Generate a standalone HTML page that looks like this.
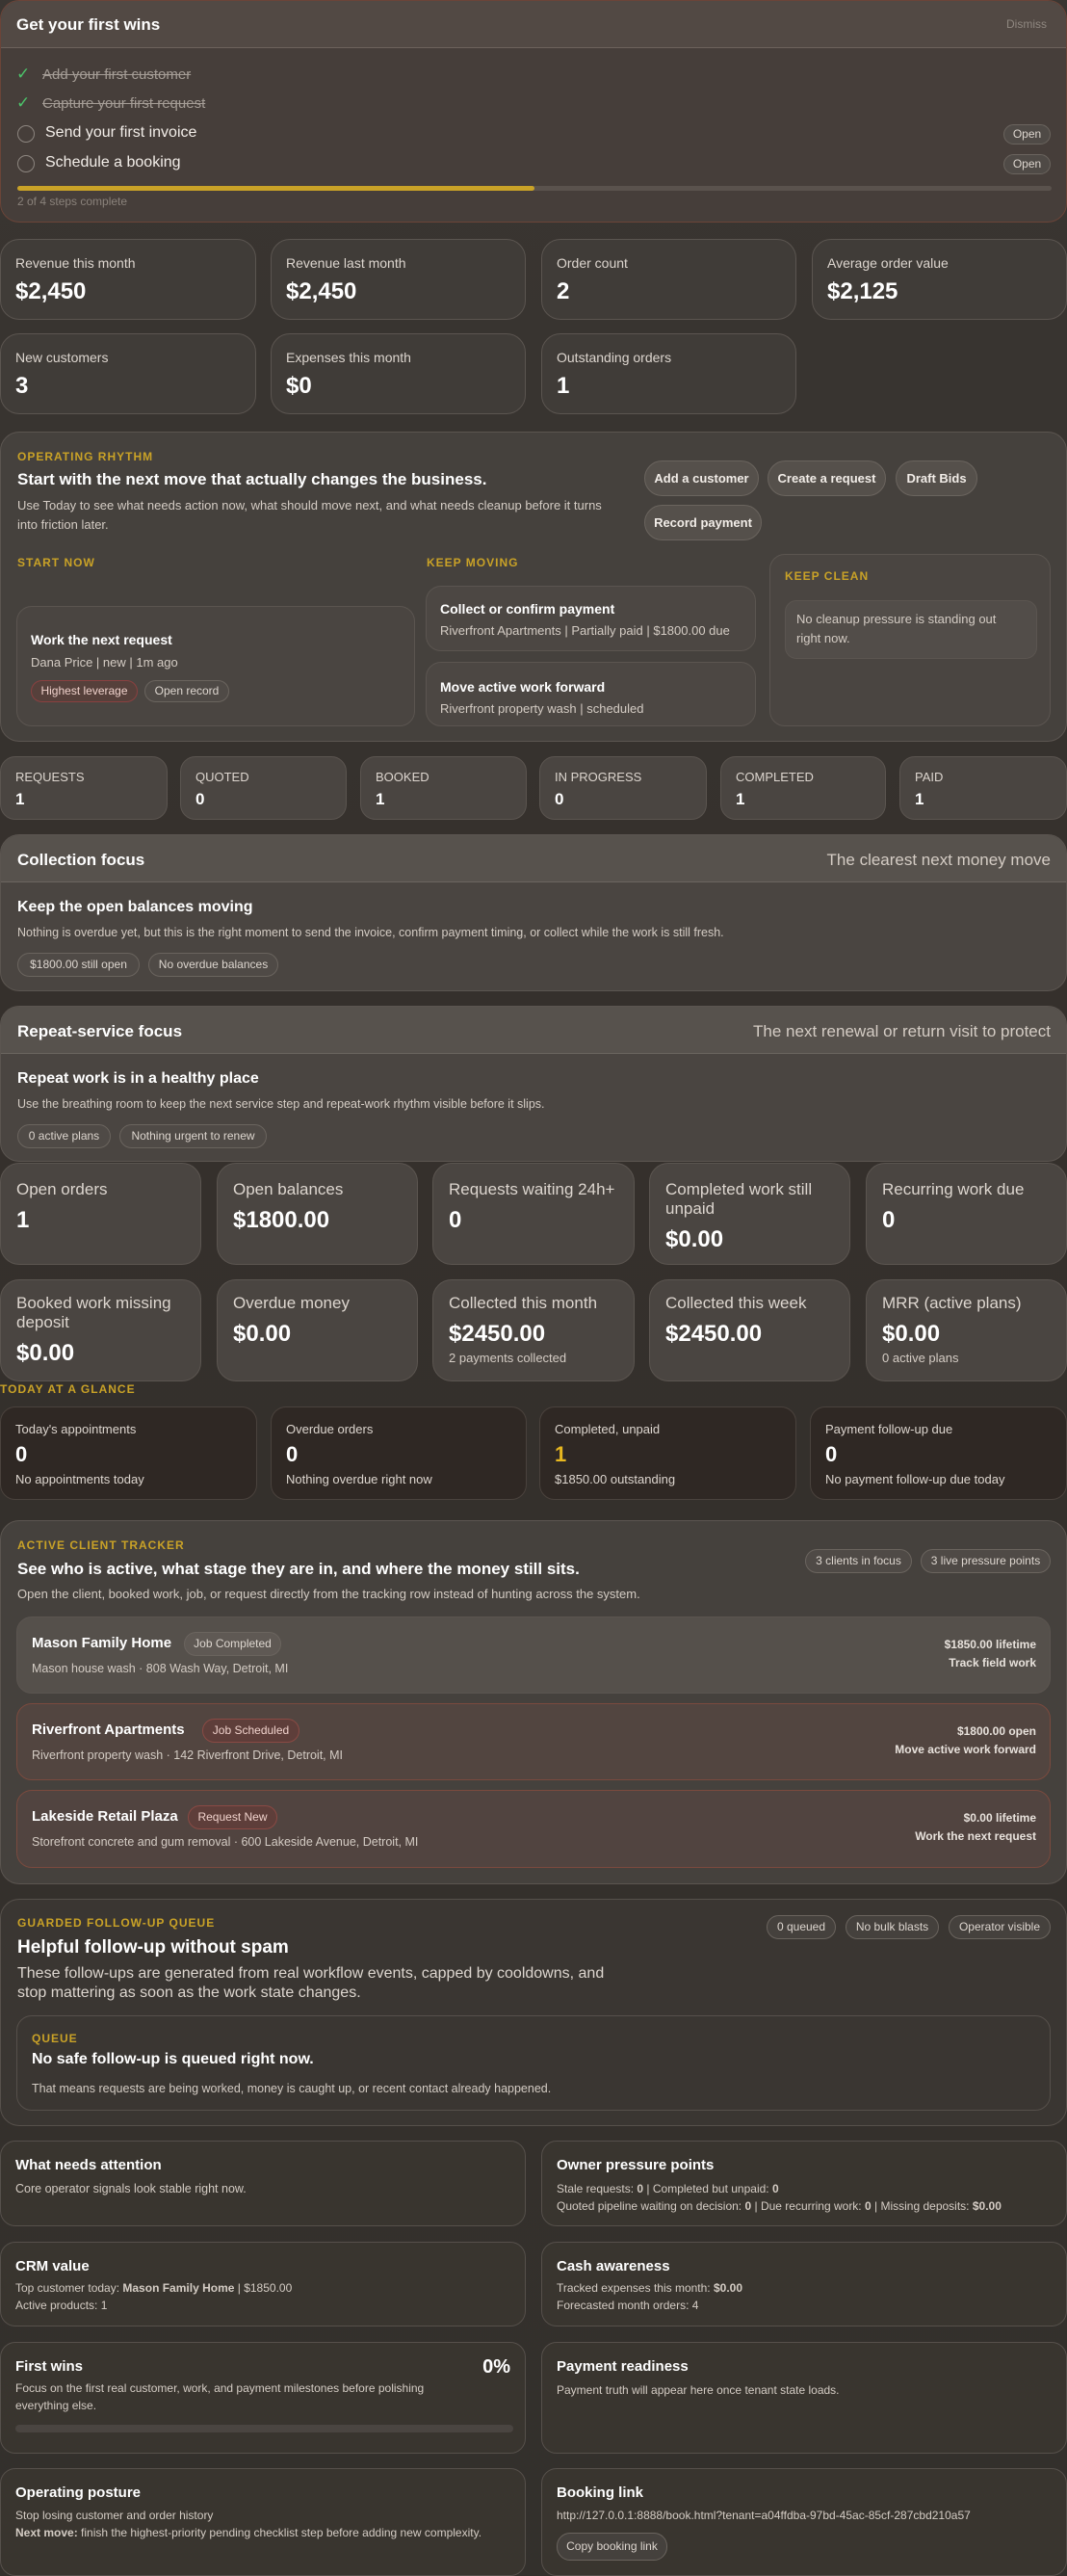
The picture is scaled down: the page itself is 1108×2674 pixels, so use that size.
<!DOCTYPE html>
<html><head><meta charset="utf-8">
<style>
*{box-sizing:border-box;margin:0;padding:0}
html,body{width:1108px;height:2674px;overflow:hidden}
body{background:linear-gradient(180deg,#3a3632 0%,#35302c 40%,#33302c 100%);font-family:"Liberation Sans",sans-serif;color:#e8e2dc;position:relative}
.a{position:absolute}
.card{position:absolute;border:1px solid #5b5550;border-radius:20px;background:#46423e}
.t{position:absolute;white-space:nowrap}
.gold{color:#c9a227;font-weight:bold;letter-spacing:1px;font-size:12px}
.pill{position:absolute;border:1px solid #6a645e;border-radius:14px;background:#4f4a46;font-size:12px;color:#ddd6cf;text-align:center;white-space:nowrap}
.lbl{font-size:14px;color:#ddd6cf}
.val{font-size:24px;font-weight:bold;color:#fff}
.h{font-weight:bold;color:#fff}
.m{font-size:13px;color:#d4ccc4}
</style></head><body>

<!-- First wins -->
<div class="card" style="left:0;top:0;width:1108px;height:231px;border-color:#6b4438;background:#463e3a;overflow:hidden">
  <div class="a" style="left:0;top:0;width:1108px;height:49px;background:#524944;border-bottom:1px solid #6d625c"></div>
  <div class="t h" style="left:16px;top:15px;font-size:17px">Get your first wins</div>
  <div class="t" style="right:20px;top:17px;font-size:12px;color:#8f8780">Dismiss</div>
  <div class="t" style="left:16px;top:66px;font-size:17px;color:#4cc36a">✓</div>
  <div class="t" style="left:43px;top:68px;font-size:15px;color:#a59d96;text-decoration:line-through">Add your first customer</div>
  <div class="t" style="left:16px;top:96px;font-size:17px;color:#4cc36a">✓</div>
  <div class="t" style="left:43px;top:98px;font-size:15px;color:#a59d96;text-decoration:line-through">Capture your first request</div>
  <div class="a" style="left:17px;top:129px;width:18px;height:18px;border:1.5px solid #8d8680;border-radius:50%"></div>
  <div class="t" style="left:46px;top:128px;font-size:16px;color:#f2ede8">Send your first invoice</div>
  <div class="pill" style="left:1041px;top:128px;width:49px;height:21px;line-height:19px">Open</div>
  <div class="a" style="left:17px;top:160px;width:18px;height:18px;border:1.5px solid #8d8680;border-radius:50%"></div>
  <div class="t" style="left:46px;top:159px;font-size:16px;color:#f2ede8">Schedule a booking</div>
  <div class="pill" style="left:1041px;top:159px;width:49px;height:21px;line-height:19px">Open</div>
  <div class="a" style="left:17px;top:192px;width:1074px;height:5px;background:#5a524d;border-radius:3px"></div>
  <div class="a" style="left:17px;top:192px;width:537px;height:5px;background:#c9a227;border-radius:3px"></div>
  <div class="t" style="left:17px;top:201px;font-size:12px;color:#8a827b">2 of 4 steps complete</div>
</div>

<!-- stat cards -->
<div class="card" style="left:0;top:248px;width:266px;height:84px;background:#403c38"><div class="t lbl" style="left:15px;top:16px">Revenue this month</div><div class="t val" style="left:15px;top:40px">$2,450</div></div>
<div class="card" style="left:281px;top:248px;width:265px;height:84px;background:#403c38"><div class="t lbl" style="left:15px;top:16px">Revenue last month</div><div class="t val" style="left:15px;top:40px">$2,450</div></div>
<div class="card" style="left:562px;top:248px;width:265px;height:84px;background:#403c38"><div class="t lbl" style="left:15px;top:16px">Order count</div><div class="t val" style="left:15px;top:40px">2</div></div>
<div class="card" style="left:843px;top:248px;width:265px;height:84px;background:#403c38"><div class="t lbl" style="left:15px;top:16px">Average order value</div><div class="t val" style="left:15px;top:40px">$2,125</div></div>
<div class="card" style="left:0;top:346px;width:266px;height:84px;background:#403c38"><div class="t lbl" style="left:15px;top:16px">New customers</div><div class="t val" style="left:15px;top:40px">3</div></div>
<div class="card" style="left:281px;top:346px;width:265px;height:84px;background:#403c38"><div class="t lbl" style="left:15px;top:16px">Expenses this month</div><div class="t val" style="left:15px;top:40px">$0</div></div>
<div class="card" style="left:562px;top:346px;width:265px;height:84px;background:#403c38"><div class="t lbl" style="left:15px;top:16px">Outstanding orders</div><div class="t val" style="left:15px;top:40px">1</div></div>

<!-- Operating rhythm -->
<div class="card" style="left:0;top:448px;width:1108px;height:322px;background:#45413d">
  <div class="t gold" style="left:17px;top:18px">OPERATING RHYTHM</div>
  <div class="t h" style="left:17px;top:39px;font-size:17px">Start with the next move that actually changes the business.</div>
  <div class="a" style="left:17px;top:66px;width:620px;font-size:13px;line-height:20px;color:#d4ccc4">Use Today to see what needs action now, what should move next, and what needs cleanup before it turns into friction later.</div>
  <div class="pill" style="left:668px;top:29px;width:119px;height:37px;line-height:35px;font-size:13px;font-weight:bold;color:#f2ede8;border-radius:19px;background:#55504b">Add a customer</div>
  <div class="pill" style="left:796px;top:29px;width:123px;height:37px;line-height:35px;font-size:13px;font-weight:bold;color:#f2ede8;border-radius:19px;background:#55504b">Create a request</div>
  <div class="pill" style="left:929px;top:29px;width:85px;height:37px;line-height:35px;font-size:13px;font-weight:bold;color:#f2ede8;border-radius:19px;background:#55504b">Draft Bids</div>
  <div class="pill" style="left:668px;top:75px;width:122px;height:37px;line-height:35px;font-size:13px;font-weight:bold;color:#f2ede8;border-radius:19px;background:#55504b">Record payment</div>
  <div class="t gold" style="left:17px;top:128px">START NOW</div>
  <div class="t gold" style="left:442px;top:128px">KEEP MOVING</div>
  <div class="card" style="left:16px;top:180px;width:414px;height:125px;background:#4a4541;border-radius:16px">
    <div class="t h" style="left:14px;top:26px;font-size:14px">Work the next request</div>
    <div class="t m" style="left:14px;top:50px">Dana Price | new | 1m ago</div>
    <div class="pill" style="left:14px;top:76px;width:111px;height:23px;line-height:21px;border-color:#8a4040;background:#56403b;color:#f0d2cc">Highest leverage</div>
    <div class="pill" style="left:132px;top:76px;width:88px;height:23px;line-height:21px">Open record</div>
  </div>
  <div class="card" style="left:441px;top:159px;width:343px;height:68px;background:#4c4743;border-radius:16px">
    <div class="t h" style="left:14px;top:15px;font-size:14px">Collect or confirm payment</div>
    <div class="t m" style="left:14px;top:38px">Riverfront Apartments | Partially paid | $1800.00 due</div>
  </div>
  <div class="card" style="left:441px;top:238px;width:343px;height:67px;background:#4c4743;border-radius:16px">
    <div class="t h" style="left:14px;top:17px;font-size:14px">Move active work forward</div>
    <div class="t m" style="left:14px;top:40px">Riverfront property wash | scheduled</div>
  </div>
  <div class="card" style="left:798px;top:126px;width:292px;height:179px;background:#4a4541;border-radius:16px">
    <div class="t gold" style="left:15px;top:15px">KEEP CLEAN</div>
    <div class="card" style="left:15px;top:47px;width:262px;height:61px;background:#524d49;border-radius:12px">
      <div class="a m" style="left:11px;top:9px;width:230px;line-height:20px">No cleanup pressure is standing out right now.</div>
    </div>
  </div>
</div>

<!-- pipeline -->
<div class="card" style="left:0;top:785px;width:174px;height:66px;background:#4a4541;border-radius:16px"><div class="t lbl" style="left:15px;top:13px;font-size:13px">REQUESTS</div><div class="t h" style="left:15px;top:34px;font-size:17px">1</div></div>
<div class="card" style="left:187px;top:785px;width:173px;height:66px;background:#4a4541;border-radius:16px"><div class="t lbl" style="left:15px;top:13px;font-size:13px">QUOTED</div><div class="t h" style="left:15px;top:34px;font-size:17px">0</div></div>
<div class="card" style="left:374px;top:785px;width:173px;height:66px;background:#4a4541;border-radius:16px"><div class="t lbl" style="left:15px;top:13px;font-size:13px">BOOKED</div><div class="t h" style="left:15px;top:34px;font-size:17px">1</div></div>
<div class="card" style="left:560px;top:785px;width:174px;height:66px;background:#4a4541;border-radius:16px"><div class="t lbl" style="left:15px;top:13px;font-size:13px">IN PROGRESS</div><div class="t h" style="left:15px;top:34px;font-size:17px">0</div></div>
<div class="card" style="left:748px;top:785px;width:172px;height:66px;background:#4a4541;border-radius:16px"><div class="t lbl" style="left:15px;top:13px;font-size:13px">COMPLETED</div><div class="t h" style="left:15px;top:34px;font-size:17px">1</div></div>
<div class="card" style="left:934px;top:785px;width:174px;height:66px;background:#4a4541;border-radius:16px"><div class="t lbl" style="left:15px;top:13px;font-size:13px">PAID</div><div class="t h" style="left:15px;top:34px;font-size:17px">1</div></div>

<!-- Collection focus -->
<div class="card" style="left:0;top:866px;width:1108px;height:163px;background:#4a4541;overflow:hidden">
  <div class="a" style="left:0;top:0;width:1108px;height:49px;background:#57524d;border-bottom:1px solid #6b655f"></div>
  <div class="t h" style="left:17px;top:16px;font-size:17px">Collection focus</div>
  <div class="t" style="right:16px;top:16px;font-size:17px;color:#d4ccc4">The clearest next money move</div>
  <div class="t h" style="left:17px;top:66px;font-size:16px">Keep the open balances moving</div>
  <div class="t m" style="left:17px;top:94px;font-size:12.5px">Nothing is overdue yet, but this is the right moment to send the invoice, confirm payment timing, or collect while the work is still fresh.</div>
  <div class="pill" style="left:17px;top:122px;width:127px;height:25px;line-height:23px">$1800.00 still open</div>
  <div class="pill" style="left:153px;top:122px;width:135px;height:25px;line-height:23px">No overdue balances</div>
</div>

<!-- Repeat-service -->
<div class="card" style="left:0;top:1044px;width:1108px;height:162px;background:#4a4541;overflow:hidden">
  <div class="a" style="left:0;top:0;width:1108px;height:49px;background:#57524d;border-bottom:1px solid #6b655f"></div>
  <div class="t h" style="left:17px;top:16px;font-size:17px">Repeat-service focus</div>
  <div class="t" style="right:16px;top:16px;font-size:17px;color:#d4ccc4">The next renewal or return visit to protect</div>
  <div class="t h" style="left:17px;top:66px;font-size:16px">Repeat work is in a healthy place</div>
  <div class="t m" style="left:17px;top:94px;font-size:12.5px">Use the breathing room to keep the next service step and repeat-work rhythm visible before it slips.</div>
  <div class="pill" style="left:17px;top:122px;width:97px;height:25px;line-height:23px">0 active plans</div>
  <div class="pill" style="left:123px;top:122px;width:153px;height:25px;line-height:23px">Nothing urgent to renew</div>
</div>

<!-- metrics -->
<div class="card" style="left:0;top:1207px;width:209px;height:106px;background:#4a4541"><div class="t" style="left:16px;top:17px;font-size:17px;color:#ddd6cf">Open orders</div><div class="t val" style="left:16px;top:45px">1</div></div>
<div class="card" style="left:225px;top:1207px;width:209px;height:106px;background:#4a4541"><div class="t" style="left:16px;top:17px;font-size:17px;color:#ddd6cf">Open balances</div><div class="t val" style="left:16px;top:45px">$1800.00</div></div>
<div class="card" style="left:449px;top:1207px;width:210px;height:106px;background:#4a4541"><div class="t" style="left:16px;top:17px;font-size:17px;color:#ddd6cf">Requests waiting 24h+</div><div class="t val" style="left:16px;top:45px">0</div></div>
<div class="card" style="left:674px;top:1207px;width:209px;height:106px;background:#4a4541"><div class="a" style="left:16px;top:17px;font-size:17px;line-height:20px;color:#ddd6cf;width:170px">Completed work still unpaid</div><div class="t val" style="left:16px;top:65px">$0.00</div></div>
<div class="card" style="left:899px;top:1207px;width:209px;height:106px;background:#4a4541"><div class="t" style="left:16px;top:17px;font-size:17px;color:#ddd6cf">Recurring work due</div><div class="t val" style="left:16px;top:45px">0</div></div>

<div class="card" style="left:0;top:1328px;width:209px;height:106px;background:#4a4541"><div class="a" style="left:16px;top:14px;font-size:17px;line-height:20px;color:#ddd6cf;width:185px">Booked work missing deposit</div><div class="t val" style="left:16px;top:62px">$0.00</div></div>
<div class="card" style="left:225px;top:1328px;width:209px;height:106px;background:#4a4541"><div class="t" style="left:16px;top:14px;font-size:17px;color:#ddd6cf">Overdue money</div><div class="t val" style="left:16px;top:42px">$0.00</div></div>
<div class="card" style="left:449px;top:1328px;width:210px;height:106px;background:#4a4541"><div class="t" style="left:16px;top:14px;font-size:17px;color:#ddd6cf">Collected this month</div><div class="t val" style="left:16px;top:42px">$2450.00</div><div class="t m" style="left:16px;top:73px">2 payments collected</div></div>
<div class="card" style="left:674px;top:1328px;width:209px;height:106px;background:#4a4541"><div class="t" style="left:16px;top:14px;font-size:17px;color:#ddd6cf">Collected this week</div><div class="t val" style="left:16px;top:42px">$2450.00</div></div>
<div class="card" style="left:899px;top:1328px;width:209px;height:106px;background:#4a4541"><div class="t" style="left:16px;top:14px;font-size:17px;color:#ddd6cf">MRR (active plans)</div><div class="t val" style="left:16px;top:42px">$0.00</div><div class="t m" style="left:16px;top:73px">0 active plans</div></div>

<div class="t gold" style="left:0;top:1435px">TODAY AT A GLANCE</div>
<div class="card" style="left:0;top:1460px;width:267px;height:97px;background:#2f2824;border-color:#4a423d;border-radius:16px"><div class="t lbl" style="left:15px;top:15px;font-size:13px">Today's appointments</div><div class="t val" style="left:15px;top:36px;font-size:22px">0</div><div class="t lbl" style="left:15px;top:67px;font-size:13px">No appointments today</div></div>
<div class="card" style="left:281px;top:1460px;width:266px;height:97px;background:#2f2824;border-color:#4a423d;border-radius:16px"><div class="t lbl" style="left:15px;top:15px;font-size:13px">Overdue orders</div><div class="t val" style="left:15px;top:36px;font-size:22px">0</div><div class="t lbl" style="left:15px;top:67px;font-size:13px">Nothing overdue right now</div></div>
<div class="card" style="left:560px;top:1460px;width:267px;height:97px;background:#2f2824;border-color:#4a423d;border-radius:16px"><div class="t lbl" style="left:15px;top:15px;font-size:13px">Completed, unpaid</div><div class="t val" style="left:15px;top:36px;font-size:22px;color:#e8b820">1</div><div class="t lbl" style="left:15px;top:67px;font-size:13px">$1850.00 outstanding</div></div>
<div class="card" style="left:841px;top:1460px;width:267px;height:97px;background:#2f2824;border-color:#4a423d;border-radius:16px"><div class="t lbl" style="left:15px;top:15px;font-size:13px">Payment follow-up due</div><div class="t val" style="left:15px;top:36px;font-size:22px">0</div><div class="t lbl" style="left:15px;top:67px;font-size:13px">No payment follow-up due today</div></div>

<!-- tracker -->
<div class="card" style="left:0;top:1578px;width:1108px;height:378px;background:#45413d">
  <div class="t gold" style="left:17px;top:18px">ACTIVE CLIENT TRACKER</div>
  <div class="t h" style="left:17px;top:40px;font-size:17px">See who is active, what stage they are in, and where the money still sits.</div>
  <div class="t m" style="left:17px;top:68px">Open the client, booked work, job, or request directly from the tracking row instead of hunting across the system.</div>
  <div class="pill" style="left:835px;top:29px;width:111px;height:25px;line-height:23px">3 clients in focus</div>
  <div class="pill" style="left:955px;top:29px;width:135px;height:25px;line-height:23px">3 live pressure points</div>
  <div class="card" style="left:16px;top:99px;width:1074px;height:80px;background:#55504b;border-radius:16px">
    <div class="t h" style="left:15px;top:18px;font-size:15px">Mason Family Home</div>
    <div class="pill" style="left:173px;top:15px;width:101px;height:25px;line-height:23px;background:#5f5954">Job Completed</div>
    <div class="t m" style="left:15px;top:46px;font-size:12.5px">Mason house wash · 808 Wash Way, Detroit, MI</div>
    <div class="t" style="right:14px;top:21px;font-size:12px;font-weight:bold;color:#e8e2dc">$1850.00 lifetime</div>
    <div class="t" style="right:14px;top:40px;font-size:12px;font-weight:bold;color:#e8e2dc">Track field work</div>
  </div>
  <div class="card" style="left:16px;top:189px;width:1074px;height:80px;background:#524540;border-color:#7a4a3e;border-radius:16px">
    <div class="t h" style="left:15px;top:18px;font-size:15px">Riverfront Apartments</div>
    <div class="pill" style="left:192px;top:15px;width:101px;height:25px;line-height:23px;background:#5e3e3a;border-color:#8a4a44;color:#f0d2cc">Job Scheduled</div>
    <div class="t m" style="left:15px;top:46px;font-size:12.5px">Riverfront property wash · 142 Riverfront Drive, Detroit, MI</div>
    <div class="t" style="right:14px;top:21px;font-size:12px;font-weight:bold;color:#e8e2dc">$1800.00 open</div>
    <div class="t" style="right:14px;top:40px;font-size:12px;font-weight:bold;color:#e8e2dc">Move active work forward</div>
  </div>
  <div class="card" style="left:16px;top:279px;width:1074px;height:81px;background:#514440;border-color:#7a4a3e;border-radius:16px">
    <div class="t h" style="left:15px;top:18px;font-size:15px">Lakeside Retail Plaza</div>
    <div class="pill" style="left:177px;top:15px;width:93px;height:25px;line-height:23px;background:#5e3e3a;border-color:#8a4a44;color:#f0d2cc">Request New</div>
    <div class="t m" style="left:15px;top:46px;font-size:12.5px">Storefront concrete and gum removal · 600 Lakeside Avenue, Detroit, MI</div>
    <div class="t" style="right:14px;top:21px;font-size:12px;font-weight:bold;color:#e8e2dc">$0.00 lifetime</div>
    <div class="t" style="right:14px;top:40px;font-size:12px;font-weight:bold;color:#e8e2dc">Work the next request</div>
  </div>
</div>

<!-- follow-up -->
<div class="card" style="left:0;top:1971px;width:1108px;height:236px;background:#3a3632;border-color:#56504b">
  <div class="t gold" style="left:17px;top:17px">GUARDED FOLLOW-UP QUEUE</div>
  <div class="t h" style="left:17px;top:39px;font-size:19px">Helpful follow-up without spam</div>
  <div class="a" style="left:17px;top:67px;width:640px;font-size:16px;line-height:20px;color:#ddd6cf">These follow-ups are generated from real workflow events, capped by cooldowns, and stop mattering as soon as the work state changes.</div>
  <div class="pill" style="left:795px;top:16px;width:72px;height:25px;line-height:23px;background:#45413d">0 queued</div>
  <div class="pill" style="left:877px;top:16px;width:97px;height:25px;line-height:23px;background:#45413d">No bulk blasts</div>
  <div class="pill" style="left:984px;top:16px;width:106px;height:25px;line-height:23px;background:#45413d">Operator visible</div>
  <div class="card" style="left:16px;top:120px;width:1074px;height:99px;background:#3a3632;border-color:#56504b;border-radius:16px">
    <div class="t gold" style="left:15px;top:16px">QUEUE</div>
    <div class="t h" style="left:15px;top:36px;font-size:16px">No safe follow-up is queued right now.</div>
    <div class="t m" style="left:15px;top:68px;font-size:12.5px">That means requests are being worked, money is caught up, or recent contact already happened.</div>
  </div>
</div>

<!-- bottom cards -->
<div class="card" style="left:0;top:2222px;width:546px;height:89px;background:#39352f;border-color:#56504b;border-radius:16px"><div class="t h" style="left:15px;top:16px;font-size:15px">What needs attention</div><div class="t m" style="left:15px;top:42px;font-size:12.5px">Core operator signals look stable right now.</div></div>
<div class="card" style="left:562px;top:2222px;width:546px;height:89px;background:#39352f;border-color:#56504b;border-radius:16px"><div class="t h" style="left:15px;top:16px;font-size:15px">Owner pressure points</div><div class="t m" style="left:15px;top:42px;font-size:12px">Stale requests: <b>0</b> | Completed but unpaid: <b>0</b></div><div class="t m" style="left:15px;top:60px;font-size:12px">Quoted pipeline waiting on decision: <b>0</b> | Due recurring work: <b>0</b> | Missing deposits: <b>$0.00</b></div></div>

<div class="card" style="left:0;top:2327px;width:546px;height:88px;background:#39352f;border-color:#56504b;border-radius:16px"><div class="t h" style="left:15px;top:16px;font-size:15px">CRM value</div><div class="t m" style="left:15px;top:40px;font-size:12px">Top customer today: <b>Mason Family Home</b> | $1850.00</div><div class="t m" style="left:15px;top:58px;font-size:12px">Active products: 1</div></div>
<div class="card" style="left:562px;top:2327px;width:546px;height:88px;background:#39352f;border-color:#56504b;border-radius:16px"><div class="t h" style="left:15px;top:16px;font-size:15px">Cash awareness</div><div class="t m" style="left:15px;top:40px;font-size:12px">Tracked expenses this month: <b>$0.00</b></div><div class="t m" style="left:15px;top:58px;font-size:12px">Forecasted month orders: 4</div></div>

<div class="card" style="left:0;top:2431px;width:546px;height:116px;background:#39352f;border-color:#56504b;border-radius:16px"><div class="t h" style="left:15px;top:16px;font-size:15px">First wins</div><div class="t h" style="right:15px;top:14px;font-size:20px">0%</div><div class="a m" style="left:15px;top:38px;width:440px;font-size:12px;line-height:18px">Focus on the first real customer, work, and payment milestones before polishing everything else.</div><div class="a" style="left:15px;top:85px;width:517px;height:8px;border-radius:4px;background:#4a4541"></div></div>
<div class="card" style="left:562px;top:2431px;width:546px;height:116px;background:#39352f;border-color:#56504b;border-radius:16px"><div class="t h" style="left:15px;top:16px;font-size:15px">Payment readiness</div><div class="t m" style="left:15px;top:42px;font-size:12px">Payment truth will appear here once tenant state loads.</div></div>

<div class="card" style="left:0;top:2562px;width:546px;height:112px;background:#39352f;border-color:#56504b;border-radius:16px"><div class="t h" style="left:15px;top:16px;font-size:15px">Operating posture</div><div class="t m" style="left:15px;top:41px;font-size:12px">Stop losing customer and order history</div><div class="t m" style="left:15px;top:59px;font-size:12px"><b>Next move:</b> finish the highest-priority pending checklist step before adding new complexity.</div></div>
<div class="card" style="left:562px;top:2562px;width:546px;height:112px;background:#39352f;border-color:#56504b;border-radius:16px"><div class="t h" style="left:15px;top:16px;font-size:15px">Booking link</div><div class="t m" style="left:15px;top:41px;font-size:12px">http://127.0.0.1:8888/book.html?tenant=a04ffdba-97bd-45ac-85cf-287cbd210a57</div><div class="pill" style="left:15px;top:66px;width:115px;height:29px;line-height:27px;background:#45413d">Copy booking link</div></div>

</body></html>
